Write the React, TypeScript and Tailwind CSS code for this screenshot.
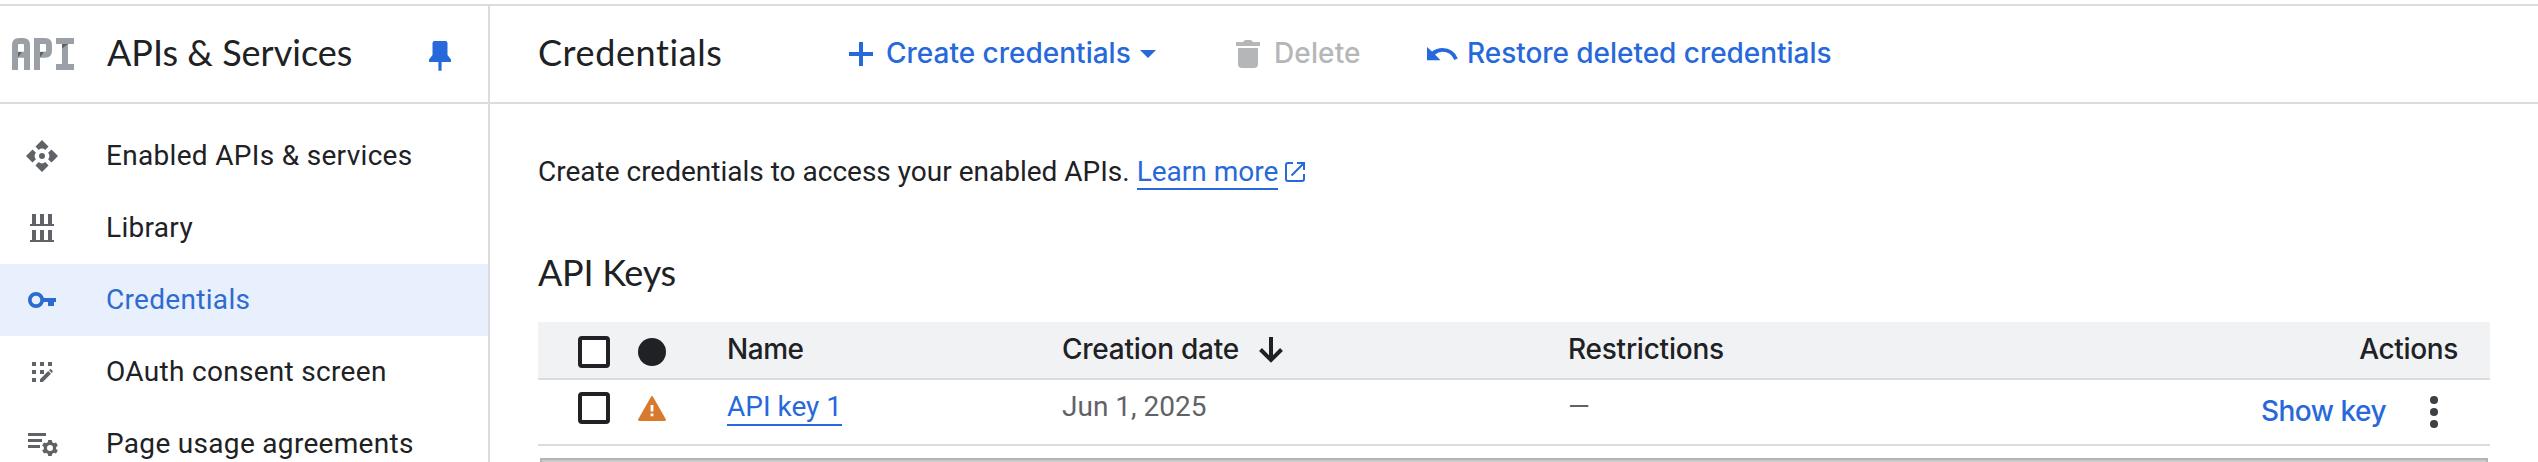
import type { ReactNode } from 'react';

const ApiLogo = () => (
  <svg width="62" height="32" viewBox="0 0 62 32" fill="none" className="shrink-0">
    <g stroke="#9aa0a6" strokeWidth="6">
      <path d="M3 32V7Q3 3 7 3H11Q15 3 15 7V32M6 16.8H12" />
      <path d="M25 32V3H33Q37 3 37 7V12.8Q37 16.8 33 16.8H28" />
      <path d="M44 3H62M53 6V26M44 29H62" />
    </g>
    <path d="M6 14H10L6 19.5zM28 14H32L28 19.5zM50 6H56L50 10.5z" fill="#5f6368" />
  </svg>
);

const PinIcon = () => (
  <svg width="22" height="30" viewBox="0 0 22 30" fill="#2769db" className="shrink-0">
    <path d="M5.5 0H16.5Q18.5 0 18.5 2V14L22 18.5V21H12.6V29.7H9.4V21H0V18.5L3.5 14V2Q3.5 0 5.5 0z" />
  </svg>
);

const EnabledIcon = () => (
  <svg width="32" height="32" viewBox="0 0 32 32" fill="#5f6368">
    {[0, 90, 180, 270].map((a) => (
      <path key={a} transform={`rotate(${a} 16 16)`} d="M16 0L22.5 6.5L19.3 9.9Q17.8 8.6 16 8.6Q14.2 8.6 12.7 9.9L9.5 6.5z" />
    ))}
    <circle cx="16" cy="16" r="3" />
  </svg>
);

const LibraryIcon = () => (
  <svg width="32" height="32" viewBox="0 0 32 32" fill="#5f6368">
    <path d="M6 2h4v10h4V2h4v10h4V2h4v10h2v2H4v-2h2zM6 18h4v10h4V18h4v10h4V18h4v10h2v2H4v-2h2z" />
  </svg>
);

const KeyIcon = () => (
  <svg width="32" height="32" viewBox="0 0 32 32">
    <circle cx="10" cy="16" r="6.2" fill="none" stroke="#2e6bd0" strokeWidth="3.7" />
    <path d="M17 14H30V18H28V22H22V18H17z" fill="#2e6bd0" />
  </svg>
);

const ConsentIcon = () => (
  <svg width="32" height="32" viewBox="0 0 32 32" fill="#5f6368">
    <path d="M6 6h4v4H6zM14 6h4v4h-4zM22 6h4v4h-4zM6 14h4v4H6zM14 14h4v4h-4zM6 22h4v4H6z" />
    <path d="M14 26V23.2L22.2 15L25 17.8L16.8 26zM23 14.2L24 13.2Q24.6 12.9 25.2 13.4L26.4 14.6Q27 15.3 26.6 16L25.7 16.9z" />
  </svg>
);

const AgreementIcon = () => (
  <svg width="32" height="32" viewBox="0 0 32 32" fill="#5f6368">
    <path d="M2 5h18v3H2zM2 11h14v3H2zM2 17h12v3H2z" />
    <circle cx="24" cy="20" r="4.6" fill="none" stroke="#5f6368" strokeWidth="3.2" />
    {[0, 60, 120, 180, 240, 300].map((a) => (
      <path key={a} transform={`rotate(${a} 24 20)`} d="M22.2 12H25.8L26.3 15H21.7z" />
    ))}
  </svg>
);

const navItems: { label: string; icon: ReactNode; active?: boolean }[] = [
  { label: 'Enabled APIs & services', icon: <EnabledIcon /> },
  { label: 'Library', icon: <LibraryIcon /> },
  { label: 'Credentials', icon: <KeyIcon />, active: true },
  { label: 'OAuth consent screen', icon: <ConsentIcon /> },
  { label: 'Page usage agreements', icon: <AgreementIcon /> },
];

const Checkbox = () => <span className="ml-10 block size-8 shrink-0 rounded-[4px] border-4 border-[#202124] bg-white" />;

export default function App() {
  return (
    <div className="h-[462px] w-full overflow-hidden whitespace-nowrap border-t-4 border-white bg-white font-['Roboto',sans-serif] text-[28px] leading-9 text-[#202124]">
      <div className="flex h-full border-t-2 border-[#dadce0]">
        <aside className="w-[490px] shrink-0 border-r-2 border-[#dadce0]">
          <header className="flex h-[98px] items-center border-b-2 border-[#dadce0] pl-3">
            <ApiLogo />
            <h1 className="ml-[33px] w-[322px] pb-1 font-['Lato',sans-serif] text-[36px] leading-[44px]">APIs &amp; Services</h1>
            <div className="pt-1"><PinIcon /></div>
          </header>
          <nav className="pt-4">
            {navItems.map((n) => (
              <a key={n.label} className={n.active ? 'flex h-[72px] items-center bg-[#e8effd] pl-[26px] text-[#2e6bd0]' : 'flex h-[72px] items-center pl-[26px]'}>
                <span className="w-20 shrink-0">{n.icon}</span>
                <span className="tracking-[0.31px]">{n.label}</span>
              </a>
            ))}
          </nav>
        </aside>

        <main className="min-w-0 grow">
          <header className="flex h-[98px] items-center border-b-2 border-[#dadce0] pl-12 font-['Inter',sans-serif] font-medium text-[#2769db]">
            <h2 className="w-[311px] pb-1 font-['Lato',sans-serif] text-[36px] font-normal leading-[44px] tracking-[0.61px] text-[#202124]">Credentials</h2>
            <svg width="24" height="24" viewBox="0 0 24 24" className="shrink-0"><path d="M10 0h4v10h10v4H14v10h-4V14H0v-4h10z" fill="#2769db" /></svg>
            <span className="ml-[13px] w-[245px] pb-0.5">Create credentials</span>
            <svg width="16" height="8" viewBox="0 0 16 8" className="ml-[9px] shrink-0"><path d="M0 0h16L8 8z" fill="#2769db" /></svg>
            <svg width="24" height="28" viewBox="0 0 24 28" className="ml-20 shrink-0"><path d="M0 2H7L9 0H15L17 2H24V6H0zM2 8H22V24Q22 28 18 28H6Q2 28 2 24z" fill="#b5b6b7" /></svg>
            <span className="ml-3.5 w-[87px] pb-0.5 tracking-[0.12px] text-[#b5b6b7]">Delete</span>
            <svg width="31" height="14" viewBox="0 0 31 14" className="ml-[66px] shrink-0"><path d="M0 0L5 4.6Q9.500 1 15.500 1Q26.500 1 30.800 11.600L27.300 12.900Q23.800 4.800 15.500 4.800Q11.500 4.800 8 7.600L13.500 13.300H0z" fill="#2769db" /></svg>
            <span className="ml-[9px] pb-0.5 tracking-[-0.04px]">Restore deleted credentials</span>
          </header>

          <div className="pl-12 pr-12">
            <p className="flex items-start pt-[50px]">
              <span>Create credentials to access your enabled APIs.</span>
              <a className="ml-[7px] h-9 border-b-2 border-[#2769db] text-[#2769db]">Learn more</a>
              <svg width="20" height="20" viewBox="0 0 20 20" className="ml-[7px] mt-[8px]" fill="none" stroke="#2769db" strokeWidth="2">
                <path d="M8 1H3Q1 1 1 3V17Q1 19 3 19H17Q19 19 19 17V12M12 1H19V8M19 1L6.500 13.500" />
              </svg>
            </p>
            <h3 className="mt-[60px] font-['Lato',sans-serif] text-[36px] leading-[44px] tracking-[-0.28px]">API Keys</h3>

            <div className="mt-7 grid h-[58px] grid-cols-[189px_335px_506px_1fr] items-center border-b-2 border-[#dadce0] bg-[#f1f2f4] font-['Inter',sans-serif] font-medium">
              <div className="flex items-center pt-1">
                <Checkbox />
                <span className="ml-7 block size-7 rounded-full bg-[#202124]" />
              </div>
              <span className="pb-0.5 tracking-[-0.45px]">Name</span>
              <span className="flex items-center">
                <span className="w-[197px] pb-0.5 tracking-[-0.25px]">Creation date</span>
                <svg width="24" height="26" viewBox="0 0 24 26" fill="none" stroke="#202124" strokeWidth="4"><path d="M12 0V23M1.500 12.500L12 23L22.500 12.500" /></svg>
              </span>
              <span className="flex justify-between">
                <span className="pb-0.5 tracking-[-0.23px]">Restrictions</span>
                <span className="pb-0.5 pr-8 tracking-[-0.36px]">Actions</span>
              </span>
            </div>

            <div className="grid h-[66px] grid-cols-[189px_335px_506px_1fr] items-start border-b-2 border-[#dadce0] pt-[9px]">
              <div className="flex items-start pt-[3px]">
                <Checkbox />
                <svg width="28" height="25" viewBox="0 0 28 25" className="ml-7 mt-1">
                  <path d="M13 .8Q14 -.6 15 .8L27.800 23.200Q28.200 25 26.500 25H1.500Q-.2 25 .2 23.200z" fill="#d77a2d" />
                  <path d="M12.600 9h2.800v6.500h-2.800zM12.600 17.500h2.800v2.800h-2.800z" fill="#fff" />
                </svg>
              </div>
              <a className="flex"><span className="h-[37px] border-b-2 border-[#2769db] text-[#2769db]">API key 1</span></a>
              <span className="text-[#5f6368]">Jun 1, 2025</span>
              <span className="flex items-start justify-between">
                <span className="text-[#5f6368]">—</span>
                <span className="flex items-center pr-[50px] pt-1">
                  <span className="mr-[42px] font-['Inter',sans-serif] font-medium tracking-[-0.5px] text-[#2769db]">Show key</span>
                  <svg width="12" height="32" viewBox="0 0 12 32" fill="#3c4043" className="mt-0.5"><circle cx="6" cy="4" r="4" /><circle cx="6" cy="16" r="4" /><circle cx="6" cy="28" r="4" /></svg>
                </span>
              </span>
            </div>

            <div className="mx-0.5 mt-3 h-5 border-2 border-[#b4b4b4] bg-[#cbcbcb]" />
          </div>
        </main>
      </div>
    </div>
  );
}
